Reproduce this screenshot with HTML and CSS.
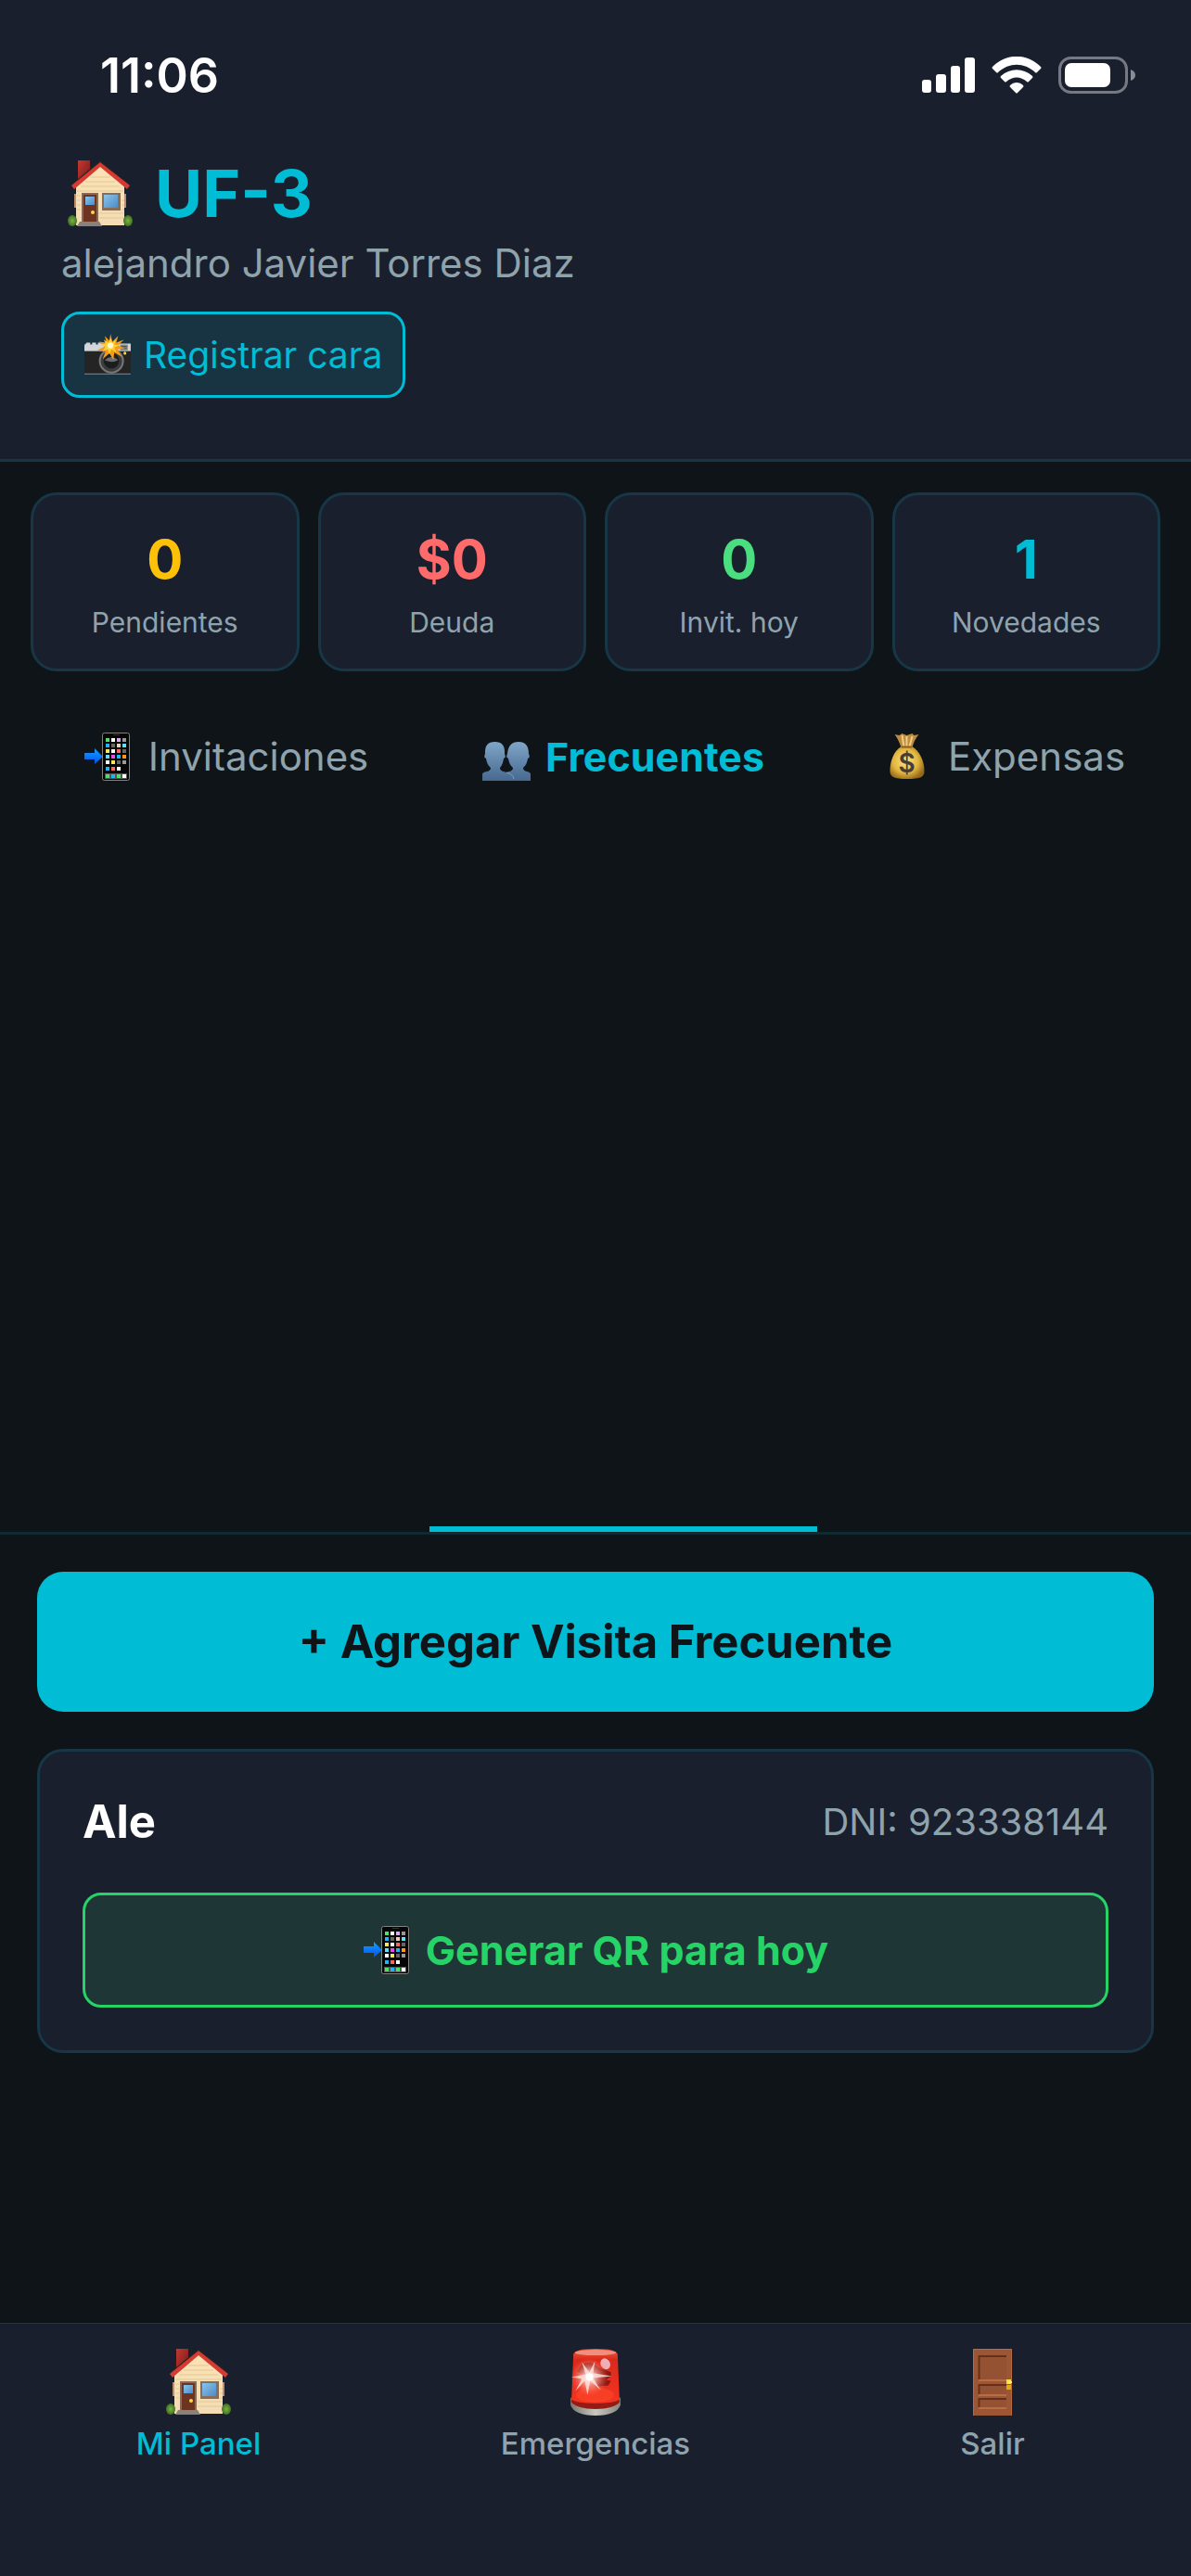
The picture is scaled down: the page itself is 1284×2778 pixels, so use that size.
FILE: index.html
```html
<!DOCTYPE html>
<html lang="es">
  <head>
    <meta charset="UTF-8" />
    <meta name="viewport" content="width=device-width, initial-scale=1.0" />
    <title>UF-3 - Mi Panel</title>
    <link rel="stylesheet" href="styles.css">
  </head>
  <body>
    <!-- Shared icons -->
    <svg class="sprite" aria-hidden="true">
      <defs>
        <linearGradient id="wall" x1="0" y1="0" x2="0" y2="1">
          <stop offset="0" stop-color="#fbe3b6" />
          <stop offset="1" stop-color="#f3dcb4" />
        </linearGradient>
        <linearGradient id="brick" x1="0" y1="0" x2="1" y2="1">
          <stop offset="0" stop-color="#c8372f" />
          <stop offset="1" stop-color="#6d1a1a" />
        </linearGradient>
        <linearGradient id="glass" x1="0" y1="0" x2="1" y2="1">
          <stop offset="0" stop-color="#8cc4ea" />
          <stop offset="1" stop-color="#4b8cc8" />
        </linearGradient>
        <linearGradient id="arrow" x1="0" y1="0" x2="0" y2="1">
          <stop offset="0" stop-color="#16a0ff" />
          <stop offset="1" stop-color="#0050f0" />
        </linearGradient>
        <radialGradient id="bush">
          <stop offset="0" stop-color="#7cb342" />
          <stop offset="1" stop-color="#3f7023" />
        </radialGradient>
      </defs>

      <symbol id="icon-house" viewBox="0 0 70 72">
        <rect x="11" y="0" width="13" height="26" fill="url(#brick)" />
        <rect x="7" y="36" width="56" height="15" fill="#b98f70" />
        <path d="M9 70V28L35 5l26 23v42z" fill="url(#wall)" />
        <path d="M24 18h22M19 23h32M14 28h42M10 33h50M34 57h26M34 62h26M10 38h4M10 43h4M10 48h4M10 53h4M58 43h3M58 48h3M58 53h3" stroke="#e3c793" stroke-width="1" />
        <path d="M5 25L35 0l31 25-3 3L35 5 8 27z" fill="#262420" />
        <path d="M4 27L35 2l32 25-3 4L35 7 7 31z" fill="#d63a32" />
        <rect x="15" y="35" width="18" height="32" fill="#8a6a55" />
        <rect x="17" y="37" width="14" height="30" fill="#6d3421" />
        <rect x="19" y="39" width="10" height="9" fill="url(#glass)" />
        <circle cx="27" cy="56" r="2" fill="#ffd54a" />
        <rect x="37" y="35" width="20" height="19" fill="#8a6d55" />
        <rect x="39" y="37" width="15" height="14" fill="url(#glass)" />
        <ellipse cx="5" cy="65" rx="5" ry="6" fill="url(#bush)" />
        <ellipse cx="65" cy="65" rx="5" ry="6" fill="url(#bush)" />
        <path d="M13 66h21l3 5H10z" fill="#8b8178" />
      </symbol>

      <symbol id="icon-phone" viewBox="0 0 50 52">
        <path d="M0 22h11v-5l9 9-9 8v-5H0z" fill="url(#arrow)" />
        <rect x="19.500" y=".5" width="29" height="51" rx="2" fill="#060606" stroke="#85807c" />
        <rect x="31" y="2" width="7" height="1" fill="#333" />
        <rect x="22" y="44" width="24" height="6" fill="#555" />
        <g stroke-width="4" stroke-dasharray="4 58">
          <g stroke="#4cdf6a"><path d="M23 8h4M23 47h4M35 47h4" /></g>
          <g stroke="#fff"><path d="M29 8h4M29 20h4M23 32h4M35 39h4M41 47h4" /></g>
          <g stroke="#e0a8f0"><path d="M35 8h4" /></g>
          <g stroke="#999"><path d="M41 8h4M41 32h4" /></g>
          <g stroke="#20b4fa"><path d="M23 14h4M35 26h4M23 39h4M29 47h4" /></g>
          <g stroke="#666"><path d="M29 14h4M41 20h4M35 32h4" /></g>
          <g stroke="#ead0b0"><path d="M35 14h4" /></g>
          <g stroke="#5ce0fa"><path d="M41 14h4M23 26h4" /></g>
          <g stroke="#fbe75a"><path d="M23 20h4M29 32h4" /></g>
          <g stroke="#f8655a"><path d="M35 20h4M29 39h4" /></g>
          <g stroke="#e54cf0"><path d="M29 26h4" /></g>
          <g stroke="#ff9b0a"><path d="M41 26h4" /></g>
        </g>
      </symbol>
    </svg>

    <header class="header">
      <div class="status-bar">
        <time class="clock">11:06</time>
        <div class="status-icons">
          <svg width="57" height="38" viewBox="0 0 57 38" fill="#fff" aria-label="Señal">
            <rect x="0" y="24" width="10" height="14" rx="3" />
            <rect x="15" y="18" width="11" height="20" rx="3" />
            <rect x="31" y="9" width="10" height="29" rx="3" />
            <rect x="46" y="0" width="11" height="38" rx="3" />
          </svg>
          <svg width="54" height="40" viewBox="0 0 54 40" fill="#fff" aria-label="Wi-Fi">
            <path d="M1 11C16-4 38-4 53 11q1 1 0 2l-4 4q-1 1-2 0C35 6 19 6 7 17q-1 1-2 0l-4-4q-1-1 0-2z" />
            <path d="M10 21c10-9 24-9 34 0q1 1 0 2l-4 4q-1 1-2 0c-7-6-15-6-22 0q-1 1-2 0l-4-4q-1-1 0-2z" />
            <path d="M20 31c4-4 10-4 14 0q1 1 0 2l-6 6q-1 1-2 0l-6-6q-1-1 0-2z" />
          </svg>
          <svg width="83" height="40" viewBox="0 0 83 40" aria-label="Batería">
            <rect x="1.500" y="1.500" width="72" height="37" rx="12" fill="none" stroke="#767983" stroke-width="3" />
            <rect x="7" y="7" width="49" height="26" rx="7" fill="#fff" />
            <path d="M78 14q5 2 5 6t-5 6z" fill="#8b8d95" />
          </svg>
        </div>
      </div>
      <div class="profile">
        <h1 class="unit">
          <svg class="unit-icon" aria-hidden="true"><use href="#icon-house" /></svg>
          UF-3
        </h1>
        <p class="owner">alejandro Javier Torres Diaz</p>
        <button type="button" class="btn-face">
          <svg class="icon" viewBox="0 0 50 44" aria-hidden="true">
            <path d="M0 18v-5q0-3 2-3V9h4v2h2V9h4v2h2V9h3v1h31v8z" fill="#d4d5d8" />
            <rect x="0" y="18" width="48" height="24" fill="#242424" />
            <path d="M0 41.500h48" stroke="#8b8b8b" />
            <rect x="37" y="11" width="8" height="6" fill="#8a8a80" />
            <path d="M38 13h6M38 15h6" stroke="#555" />
            <circle cx="42" cy="20" r="1.500" fill="#ffd740" />
            <circle cx="28" cy="28" r="13" fill="#777" />
            <circle cx="28" cy="28" r="11" fill="#3a3b3d" />
            <circle cx="28" cy="28" r="8" fill="#1b1c1e" />
            <path d="M21 27q7-6 14 0-6 4-14 0z" fill="#686b70" />
            <path d="M27 0l2 8 6-6-2 7 8-3-6 6 7 3-8 1 5 8-8-5-1 8-4-7-7 6 3-8-9-1 8-4-6-5 8 1-2-7 5 5z" fill="#f79a14" />
            <path d="M27 4l2 5 4-3-2 5 5 1-5 2 2 5-5-3-2 5-2-5-5 2 3-5-5-2 5-1-2-4 5 3z" fill="#ffd23c" />
            <circle cx="27" cy="12" r="3" fill="#fff8c8" />
          </svg>
          Registrar cara
        </button>
      </div>
    </header>

    <section class="stats">
      <div class="stat">
        <strong class="stat-value pending">0</strong>
        <span class="stat-label">Pendientes</span>
      </div>
      <div class="stat">
        <strong class="stat-value debt">$0</strong>
        <span class="stat-label">Deuda</span>
      </div>
      <div class="stat">
        <strong class="stat-value guests">0</strong>
        <span class="stat-label">Invit. hoy</span>
      </div>
      <div class="stat">
        <strong class="stat-value news">1</strong>
        <span class="stat-label">Novedades</span>
      </div>
    </section>

    <div class="tabs" role="tablist">
      <button type="button" class="tab" role="tab">
        <svg class="icon" aria-hidden="true"><use href="#icon-phone" /></svg>
        Invitaciones
      </button>
      <button type="button" class="tab active" role="tab" aria-selected="true">
        <svg class="icon" viewBox="0 -10 52 52" aria-hidden="true">
          <defs>
            <linearGradient id="people" x1="0" y1="0" x2="0" y2="1">
              <stop offset="0" stop-color="#7fa6c8" />
              <stop offset="1" stop-color="#47688f" />
            </linearGradient>
          </defs>
          <path d="M0 42v-7q0-2 5-3 4-1 4-4-4-3-5-10-3-1-1-5Q2 0 13.500 0T24 13q2 4-1 5-1 7-4 10 0 3 4 4l3 1 3-1q4-1 4-4-4-3-5-10-3-1-1-5Q28 0 39 0t11 13q2 4-1 5-1 7-5 10 0 3 4 4 4 1 4 3v7z" fill="url(#people)" />
          <path d="M26 33q7 2 8 7" fill="none" stroke="#7c9fc0" />
        </svg>
        Frecuentes
      </button>
      <button type="button" class="tab" role="tab">
        <svg class="icon" viewBox="-7 -1 51 52" aria-hidden="true">
          <defs>
            <radialGradient id="bag" cx=".45" cy=".45" r=".6">
              <stop offset="0" stop-color="#fbe384" />
              <stop offset=".6" stop-color="#e3b740" />
              <stop offset="1" stop-color="#94681a" />
            </radialGradient>
          </defs>
          <path d="M12 15Q9 6 5 1l5 1 3-2 5 2 6-2 2 2 5-1q-5 6-7 14z" fill="#bd8b3d" />
          <path d="M13 2l2 12M18 3v11M24 3l-3 11" stroke="#f0cd83" stroke-width="2" />
          <path d="M12 14h12c8 5 13 16 13 26 0 7-4 9-18.500 9S0 47 0 40c0-10 4-21 12-26z" fill="url(#bag)" />
          <path d="M12 14.500h12" stroke="#8c6020" stroke-width="2" />
          <text x="18" y="42" class="bag-sign">$</text>
        </svg>
        Expensas
      </button>
    </div>

    <main class="content">
      <button type="button" class="btn-add">+ Agregar Visita Frecuente</button>

      <article class="visit">
        <div class="visit-info">
          <h2 class="visit-name">Ale</h2>
          <span class="visit-dni">DNI: 923338144</span>
        </div>
        <button type="button" class="btn-qr">
          <svg class="icon" aria-hidden="true"><use href="#icon-phone" /></svg>
          Generar QR para hoy
        </button>
      </article>
    </main>

    <nav class="bottom-nav">
      <a href="#panel" class="nav-item active">
        <svg class="nav-icon" aria-hidden="true"><use href="#icon-house" /></svg>
        Mi Panel
      </a>
      <a href="#emergencias" class="nav-item">
        <svg class="nav-icon" viewBox="0 0 53 71" aria-hidden="true">
          <defs>
            <linearGradient id="base">
              <stop offset="0" stop-color="#77776f" />
              <stop offset=".5" stop-color="#c9c9c2" />
              <stop offset="1" stop-color="#85857e" />
            </linearGradient>
            <linearGradient id="lamp" x1="0" y1="0" x2="0" y2="1">
              <stop offset="0" stop-color="#f05a42" />
              <stop offset=".2" stop-color="#d92a1c" />
              <stop offset="1" stop-color="#f43420" />
            </linearGradient>
            <radialGradient id="flare">
              <stop offset="0" stop-color="#fff" />
              <stop offset=".3" stop-color="#ffd0c8" stop-opacity=".8" />
              <stop offset="1" stop-color="#ff6a58" stop-opacity="0" />
            </radialGradient>
          </defs>
          <path d="M0 52h53v8q-4 11-26.500 11T0 60z" fill="url(#base)" />
          <path d="M1 52h51v5q-6 7-25.500 7T1 57z" fill="#951c14" />
          <path d="M3 6q1-6 23.500-6T50 6l2 48q-6 4-25.500 4T1 54z" fill="url(#lamp)" />
          <ellipse cx="26.500" cy="4" rx="22" ry="3" fill="#f0907c" />
          <path d="M7 24q5-10 15-9l8 5 13 5v4l-5 4 5 1-3 5-11 1-5-7z" fill="#8e1712" />
          <ellipse cx="37" cy="16" rx="5" ry="6" fill="#eeb0b4" transform="rotate(-30 37 16)" />
          <ellipse cx="26" cy="49" rx="20" ry="8" fill="#ff4b2b" opacity=".5" />
          <circle cx="20" cy="30" r="20" fill="url(#flare)" />
          <path d="M1 30l15-3-4-13 8 11 6-12-2 13 20 3-20 2 8 13-11-10-3 15-3-15-10 11 7-13z" fill="#ffe5df" opacity=".8" />
          <circle cx="20" cy="30" r="4" fill="#fff" />
        </svg>
        Emergencias
      </a>
      <a href="#salir" class="nav-item">
        <svg class="nav-icon" viewBox="0 0 42 72" aria-hidden="true">
          <rect width="42" height="72" fill="#9c5634" />
          <path d="M.5 72V.5h41V72" fill="none" stroke="#b56c45" />
          <path d="M6 7h30v26H6zM6 38h30v11H6zM6 53h30v10H6z" fill="#945232" />
          <path d="M6.500 33V8H36M6.500 49V39H36M6.500 63V54H36" fill="none" stroke="#63311b" stroke-width="2" />
          <path d="M6 34h30M6 50h30M6 64h30" stroke="#b96d47" stroke-width="2" />
          <rect x="36" y="33" width="5" height="5" fill="#ffdf3c" />
          <rect x="36" y="39" width="5" height="5" fill="#e2a714" />
          <path d="M38 36h4" stroke="#fff07a" stroke-width="2" />
        </svg>
        Salir
      </a>
    </nav>
  </body>
</html>
```
FILE: styles.css
```css
* {
  box-sizing: border-box;
}
body {
  margin: 0;
  min-height: 100vh;
  display: flex;
  flex-direction: column;
  background-color: #0f1419;
  color: #8fa3ad;
  font-family: Inter, "Liberation Sans", sans-serif;
}
h1,
h2,
p {
  margin: 0;
}
button {
  font-family: inherit;
  cursor: pointer;
}
.sprite {
  position: absolute;
  width: 0;
  height: 0;
}
.icon {
  width: 52px;
  height: 52px;
  flex-shrink: 0;
}

/* Header */
.header {
  background-color: #1a1f2e;
  border-bottom: 3px solid #173646;
}
.status-bar {
  display: flex;
  justify-content: space-between;
  align-items: center;
  height: 132px;
  padding: 30px 60px 0 108px;
}
.clock {
  color: #fff;
  font-size: 52px;
  font-weight: 600;
}
.status-icons {
  display: flex;
  align-items: center;
  gap: 18px;
}
.profile {
  padding: 34px 66px 66px;
}
.unit {
  display: flex;
  align-items: center;
  gap: 17px;
  color: #00bcd4;
  font-size: 70px;
  font-weight: 700;
  line-height: 86px;
}
.unit-icon {
  width: 84px;
  height: 72px;
}
.owner {
  margin: 6px 0 26px;
  font-size: 42px;
  line-height: 52px;
}
.btn-face {
  display: flex;
  align-items: center;
  gap: 12px;
  height: 93px;
  padding: 0 22px;
  border: 3px solid #00bcd4;
  border-radius: 20px;
  background-color: #183443;
  color: #00bcd4;
  font-size: 39px;
}

/* Stats */
.stats {
  display: grid;
  grid-template-columns: repeat(4, 1fr);
  gap: 20px;
  padding: 33px 33px 0;
}
.stat {
  display: flex;
  flex-direction: column;
  align-items: center;
  padding: 33px 12px 30px;
  border: 3px solid #173646;
  border-radius: 28px;
  background-color: #1a1f2e;
}
.stat-value {
  font-size: 58px;
  font-weight: 700;
  line-height: 72px;
}
.stat-label {
  margin-top: 12px;
  font-size: 30px;
  line-height: 40px;
}
.pending {
  color: #ffc107;
}
.debt {
  color: #ff6b6b;
}
.guests {
  color: #4ade80;
}
.news {
  color: #00bcd4;
}

/* Tabs */
.tabs {
  flex: 1 1 161px;
  display: grid;
  grid-template-columns: 439fr 418fr 403fr;
  padding-left: 24px;
  border-bottom: 3px solid #0f2a30;
}
.tab {
  display: flex;
  justify-content: center;
  align-items: flex-start;
  gap: 18px;
  padding: 66px 0 0;
  border: none;
  border-bottom: 6px solid transparent;
  background: none;
  color: #8fa3ad;
  font-size: 42px;
  line-height: 52px;
}
.tab.active {
  gap: 16px;
  border-bottom-color: #00bcd4;
  color: #00bcd4;
  font-size: 43px;
  font-weight: 700;
}
.bag-sign {
  fill: #4a3c34;
  font-size: 28px;
  font-weight: 600;
  text-anchor: middle;
}

/* Content */
.content {
  flex: 1 1 0;
  padding: 40px;
}
.btn-add {
  width: 100%;
  height: 151px;
  border: none;
  border-radius: 28px;
  background-color: #00bcd4;
  color: #0f1419;
  font-size: 49px;
  font-weight: 700;
}
.visit {
  margin-top: 40px;
  padding: 46px;
  border: 3px solid #173646;
  border-radius: 28px;
  background-color: #1a1f2e;
}
.visit-info {
  display: flex;
  justify-content: space-between;
  align-items: center;
  margin-bottom: 46px;
  line-height: 60px;
}
.visit-name {
  color: #fff;
  font-size: 49px;
  font-weight: 700;
}
.visit-dni {
  font-size: 40px;
}
.btn-qr {
  display: flex;
  justify-content: center;
  align-items: center;
  gap: 16px;
  width: 100%;
  height: 124px;
  border: 3px solid #25d366;
  border-radius: 20px;
  background-color: #1e3635;
  color: #25d366;
  font-size: 43px;
  font-weight: 700;
}

/* Bottom navigation */
.bottom-nav {
  display: grid;
  grid-template-columns: repeat(3, 1fr);
  padding: 27px 0 123px;
  border-top: 1px solid #173646;
  background-color: #1a1f2e;
}
.nav-item {
  display: flex;
  flex-direction: column;
  align-items: center;
  gap: 10px;
  color: #8fa3ad;
  font-size: 33px;
  font-weight: 500;
  line-height: 40px;
  text-decoration: none;
}
.nav-item.active {
  color: #00bcd4;
}
.nav-icon {
  width: 72px;
  height: 72px;
}
```
